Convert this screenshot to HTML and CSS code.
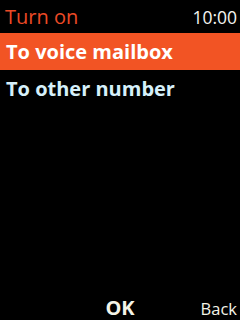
FILE: index.html
```html
<!DOCTYPE html>
<html>
<head>
<meta charset="utf-8">
<link rel="stylesheet" href="styles.css">
</head>
<body>
<div class="screen">
  <div class="header">
    <span class="title">Turn on</span>
    <span class="time">10:00</span>
  </div>
  <ul class="menu">
    <li class="item selected">To voice mailbox</li>
    <li class="item">To other number</li>
  </ul>
  <div class="softkeys">
    <span class="sk-left"></span>
    <span class="sk-mid">OK</span>
    <span class="sk-right">Back</span>
  </div>
</div>
</body>
</html>
```
FILE: styles.css
```css
html, body {
  margin: 0;
  padding: 0;
  background: #000;
}
.screen {
  width: 240px;
  height: 320px;
  background: #000;
  display: flex;
  flex-direction: column;
  font-family: "Open Sans", "DejaVu Sans", sans-serif;
  overflow: hidden;
}
.header {
  height: 33px;
  display: flex;
  justify-content: space-between;
  align-items: center;
  padding: 0 3px 0 5px;
}
.title {
  color: #ec4a26;
  font-size: 20px;
}
.time {
  color: #f4f4f0;
  font-size: 17.5px;
}
.menu {
  list-style: none;
  margin: 0;
  padding: 0;
  flex: 1;
}
.item {
  height: 37px;
  line-height: 37px;
  padding-left: 6px;
  font-size: 20px;
  font-weight: bold;
  color: #d6f0fa;
}
.item.selected {
  background: #f25424;
  color: #fff;
}
.softkeys {
  display: grid;
  grid-template-columns: 1fr 1fr 1fr;
  align-items: end;
  height: 26px;
  padding: 0 3px 1px;
}
.sk-mid {
  text-align: center;
  font-weight: bold;
  font-size: 20px;
  line-height: 22px;
  color: #f4f4e8;
}
.sk-right {
  text-align: right;
  font-size: 16.5px;
  line-height: 20px;
  color: #f4f4e8;
}
```
